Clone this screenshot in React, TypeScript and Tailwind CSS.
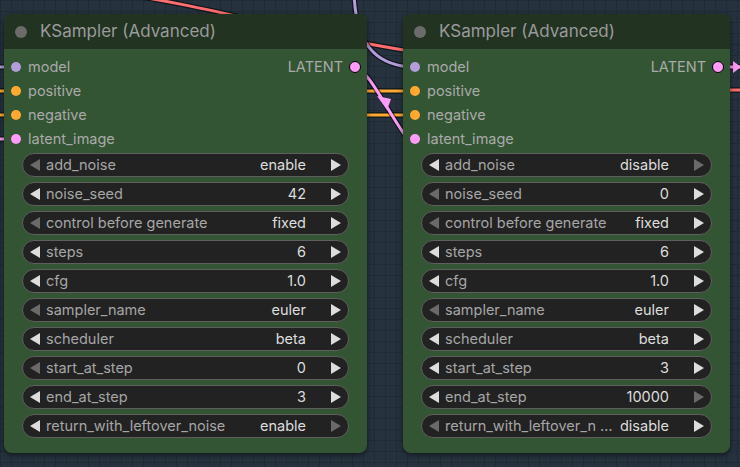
import React from "react";

type Widget = { label: string; value: string; l: boolean; r: boolean };

const ON = "#dddddd";
const OFF = "#6a6a6a";

const node1: Widget[] = [
  { label: "add_noise", value: "enable", l: false, r: true },
  { label: "noise_seed", value: "42", l: true, r: true },
  { label: "control before generate", value: "fixed", l: false, r: true },
  { label: "steps", value: "6", l: true, r: true },
  { label: "cfg", value: "1.0", l: true, r: true },
  { label: "sampler_name", value: "euler", l: false, r: true },
  { label: "scheduler", value: "beta", l: true, r: true },
  { label: "start_at_step", value: "0", l: false, r: true },
  { label: "end_at_step", value: "3", l: true, r: true },
  { label: "return_with_leftover_noise", value: "enable", l: true, r: false },
];

const node2: Widget[] = [
  { label: "add_noise", value: "disable", l: true, r: false },
  { label: "noise_seed", value: "0", l: false, r: true },
  { label: "control before generate", value: "fixed", l: false, r: true },
  { label: "steps", value: "6", l: true, r: true },
  { label: "cfg", value: "1.0", l: true, r: true },
  { label: "sampler_name", value: "euler", l: false, r: true },
  { label: "scheduler", value: "beta", l: true, r: true },
  { label: "start_at_step", value: "3", l: true, r: true },
  { label: "end_at_step", value: "10000", l: true, r: false },
  { label: "return_with_leftover_n \u2026", value: "disable", l: false, r: true },
];

const slots = [
  { name: "model", color: "#b39ddb" },
  { name: "positive", color: "#ffa931" },
  { name: "negative", color: "#ffa931" },
  { name: "latent_image", color: "#ff9cf9" },
];

function Arrow({ dir, on }: { dir: "l" | "r"; on: boolean }) {
  return (
    <svg width="10" height="12" viewBox="0 0 10 12" className="shrink-0">
      {dir === "l" ? (
        <polygon points="10,0 0,6 10,12" fill={on ? ON : OFF} />
      ) : (
        <polygon points="0,0 10,6 0,12" fill={on ? ON : OFF} />
      )}
    </svg>
  );
}

function WidgetRow({ w }: { w: Widget }) {
  return (
    <div className="flex h-[24px] items-center rounded-full border border-[#5f5f5f] bg-[#222222] text-[14.5px] leading-none">
      <div className="ml-[7px]">
        <Arrow dir="l" on={w.l} />
      </div>
      <span className="ml-[6px] whitespace-nowrap text-[#a6a6a6]">{w.label}</span>
      <span className="ml-auto whitespace-nowrap text-[#dddddd]">{w.value}</span>
      <div className="ml-[25px] mr-[7px]">
        <Arrow dir="r" on={w.r} />
      </div>
    </div>
  );
}

function Node({
  left,
  width,
  widgets,
}: {
  left: number;
  width: number;
  widgets: Widget[];
}) {
  return (
    <div
      className="absolute top-[14px] flex h-[439px] flex-col overflow-hidden rounded-[8px] bg-[#335533] shadow-[0_2px_6px_rgba(0,0,0,0.55)]"
      style={{ left, width }}
    >
      <div className="flex h-[35px] shrink-0 items-center bg-[#223322]">
        <div className="ml-[11px] h-[12px] w-[12px] rounded-full bg-[#6b6b6b]" />
        <span className="ml-[13px] text-[17px] leading-none text-[#9a9a9a]">KSampler (Advanced)</span>
      </div>
      <div className="flex flex-col pt-[6px]">
        {slots.map((s, i) => (
          <div
            key={s.name}
            className="relative flex h-[24px] items-center text-[14.5px] leading-none text-[#aaaaaa]"
          >
            <div
              className="absolute left-[7px] h-[10px] w-[10px] rounded-full"
              style={{ background: s.color }}
            />
            <span className="ml-[24px]">{s.name}</span>
            {i === 0 && (
              <>
                <span className="ml-auto mr-[24px]">LATENT</span>
                <div className="absolute right-[6px] h-[12px] w-[12px] rounded-full border-[1.5px] border-black bg-[#ff9cf9]" />
              </>
            )}
          </div>
        ))}
      </div>
      <div className="mx-[18px] mt-[2px] flex flex-col gap-[5px]">
        {widgets.map((w) => (
          <WidgetRow key={w.label} w={w} />
        ))}
      </div>
    </div>
  );
}

function Link({ d, color }: { d: string; color: string }) {
  return (
    <g fill="none" strokeLinecap="round">
      <path d={d} stroke="rgba(0,0,0,0.55)" strokeWidth={5.5} />
      <path d={d} stroke={color} strokeWidth={3} />
    </g>
  );
}

export default function App() {
  return (
    <div
      className="relative h-[467px] w-[740px] overflow-hidden bg-[#26333f] [font-family:Inter,'Noto_Sans',sans-serif]"
      style={{
        backgroundImage:
          "linear-gradient(to right, rgba(0,0,0,0.13) 1px, transparent 1px), linear-gradient(to bottom, rgba(0,0,0,0.13) 1px, transparent 1px)",
        backgroundSize: "11px 11px",
      }}
    >
      <svg className="absolute inset-0" width="740" height="467" viewBox="0 0 740 467">
        {/* VAE link passing under the first node */}
        <Link d="M120 -6 C 200 4, 300 34, 410 51" color="#ff6e6e" />
        <Link d="M720 90 L 745 90" color="#ff6e6e" />
        {/* model link into the second node */}
        <Link d="M354 -6 C 356 40, 372 64, 410 67" color="#b39ddb" />
        <Link d="M-6 67 L 12 67" color="#b39ddb" />
        {/* conditioning links */}
        <Link d="M-6 91 L 410 91" color="#ffa931" />
        <Link d="M-6 115 L 410 115" color="#ffa931" />
        {/* latent links */}
        <Link d="M-6 139 L 12 139" color="#ff9cf9" />
        <Link d="M355 67 C 368 68, 392 120, 410 142" color="#ff9cf9" />
        <polygon points="377,96 391,99 387,110" fill="#ff9cf9" />
        <Link d="M718 67 L 745 67" color="#ff9cf9" />
        <polygon points="733,61 741,67 733,73" fill="#ff9cf9" />
      </svg>
      <Node left={4} width={363} widgets={node1} />
      <Node left={403} width={327} widgets={node2} />
    </div>
  );
}
